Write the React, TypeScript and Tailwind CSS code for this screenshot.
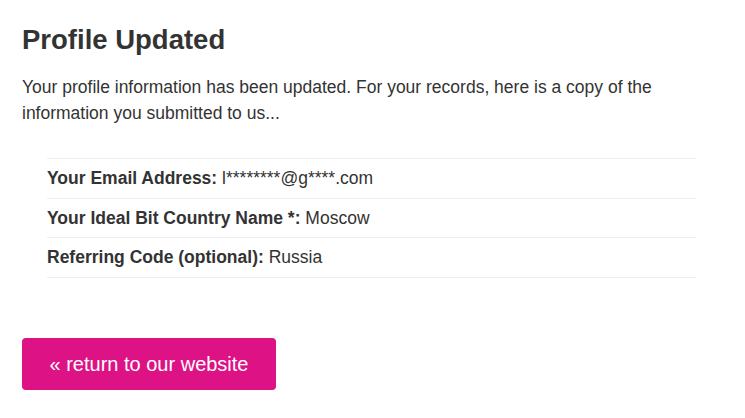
export default function App() {
  const rows = [
    { label: 'Your Email Address:', value: 'l********@g****.com' },
    { label: 'Your Ideal Bit Country Name *:', value: 'Moscow' },
    { label: 'Referring Code (optional):', value: 'Russia' },
  ];

  return (
    <div className="min-h-[418px] bg-white px-[22px] pt-[24px] font-['Liberation_Sans',Arial,sans-serif] text-[#333]">
      <h1 className="text-[27.5px] font-bold leading-[32px]">Profile Updated</h1>
      <p className="mt-[18px] w-[660px] text-[17.5px] leading-[26px] text-[#333]">
        Your profile information has been updated. For your records, here is a copy of the information you submitted to us...
      </p>

      <div className="mt-[32px] ml-[25px] w-[649px] border-t border-[#eee]">
        {rows.map((row) => (
          <div key={row.label} className="border-b border-[#eee] py-[7px] text-[17.5px] leading-[24.7px]">
            <span className="font-bold">{row.label}</span> {row.value}
          </div>
        ))}
      </div>

      <button className="mt-[60px] h-[52px] w-[254px] rounded-[4px] bg-[#dd1285] text-[20px] text-white">
        « return to our website
      </button>
    </div>
  );
}
